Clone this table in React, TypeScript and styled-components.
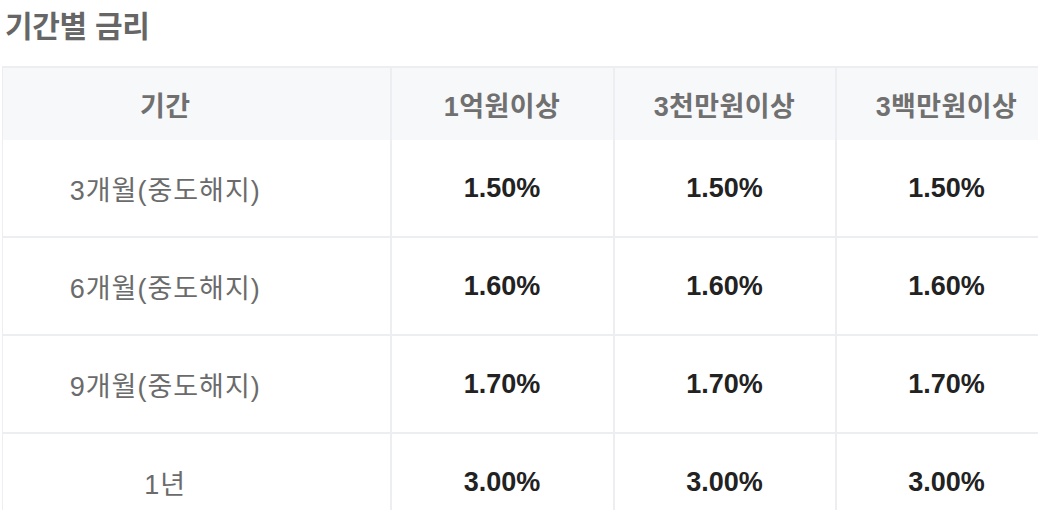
import styled, { createGlobalStyle } from "styled-components";

const GlobalStyle = createGlobalStyle`
  html, body {
    margin: 0;
    padding: 0;
    background: #ffffff;
    overflow: hidden;
  }
  body {
    font-family: "Liberation Sans", "Noto Sans CJK KR", sans-serif;
  }
`;

const Page = styled.div`
  width: 1038px;
  height: 510px;
  overflow: hidden;
  padding-left: 2px;
  box-sizing: border-box;
`;

const Title = styled.h2`
  margin: 0;
  padding: 8px 0 0 3px;
  height: 66px;
  box-sizing: border-box;
  font-size: 30px;
  line-height: 38px;
  font-weight: 700;
  color: #666666;
  letter-spacing: -0.3px;
`;

const Table = styled.table`
  width: 1055px;
  border-collapse: collapse;
  table-layout: fixed;
  border-top: 2px solid #eceef2;
  border-left: 1px solid #eceef2;
`;

const HeadCell = styled.th<{ $first?: boolean }>`
  height: 72px;
  padding: 0 ${(p) => (p.$first ? "62px" : "0")} 0 0;
  background: #f7f8fa;
  color: #707070;
  font-size: 27px;
  font-weight: 700;
  letter-spacing: 0.4px;
  text-align: center;
  border-right: 2px solid #eceef2;
`;

const Row = styled.tr`
  border-bottom: 2px solid #eceef2;
`;

const Cell = styled.td<{ $first?: boolean }>`
  height: 96px;
  padding: 0 ${(p) => (p.$first ? "62px" : "0")} 0 0;
  text-align: center;
  border-right: 2px solid #eceef2;
  font-size: 27px;
  letter-spacing: ${(p) => (p.$first ? "1px" : "0")};
  font-weight: ${(p) => (p.$first ? 400 : 700)};
  color: ${(p) => (p.$first ? "#6b6b6b" : "#222222")};
`;

const rows = [
  { period: "3개월(중도해지)", rates: ["1.50%", "1.50%", "1.50%"] },
  { period: "6개월(중도해지)", rates: ["1.60%", "1.60%", "1.60%"] },
  { period: "9개월(중도해지)", rates: ["1.70%", "1.70%", "1.70%"] },
  { period: "1년", rates: ["3.00%", "3.00%", "3.00%"] },
];

const App = () => {
  return (
    <Page>
      <GlobalStyle />
      <Title>기간별 금리</Title>
      <Table>
        <colgroup>
          <col style={{ width: 388 }} />
          <col style={{ width: 223 }} />
          <col style={{ width: 222 }} />
          <col style={{ width: 222 }} />
        </colgroup>
        <thead>
          <tr>
            <HeadCell $first>기간</HeadCell>
            <HeadCell>1억원이상</HeadCell>
            <HeadCell>3천만원이상</HeadCell>
            <HeadCell>3백만원이상</HeadCell>
          </tr>
        </thead>
        <tbody>
          {rows.map((r) => (
            <Row key={r.period}>
              <Cell $first>{r.period}</Cell>
              {r.rates.map((rate, i) => (
                <Cell key={i}>{rate}</Cell>
              ))}
            </Row>
          ))}
        </tbody>
      </Table>
    </Page>
  );
};

export default App;
